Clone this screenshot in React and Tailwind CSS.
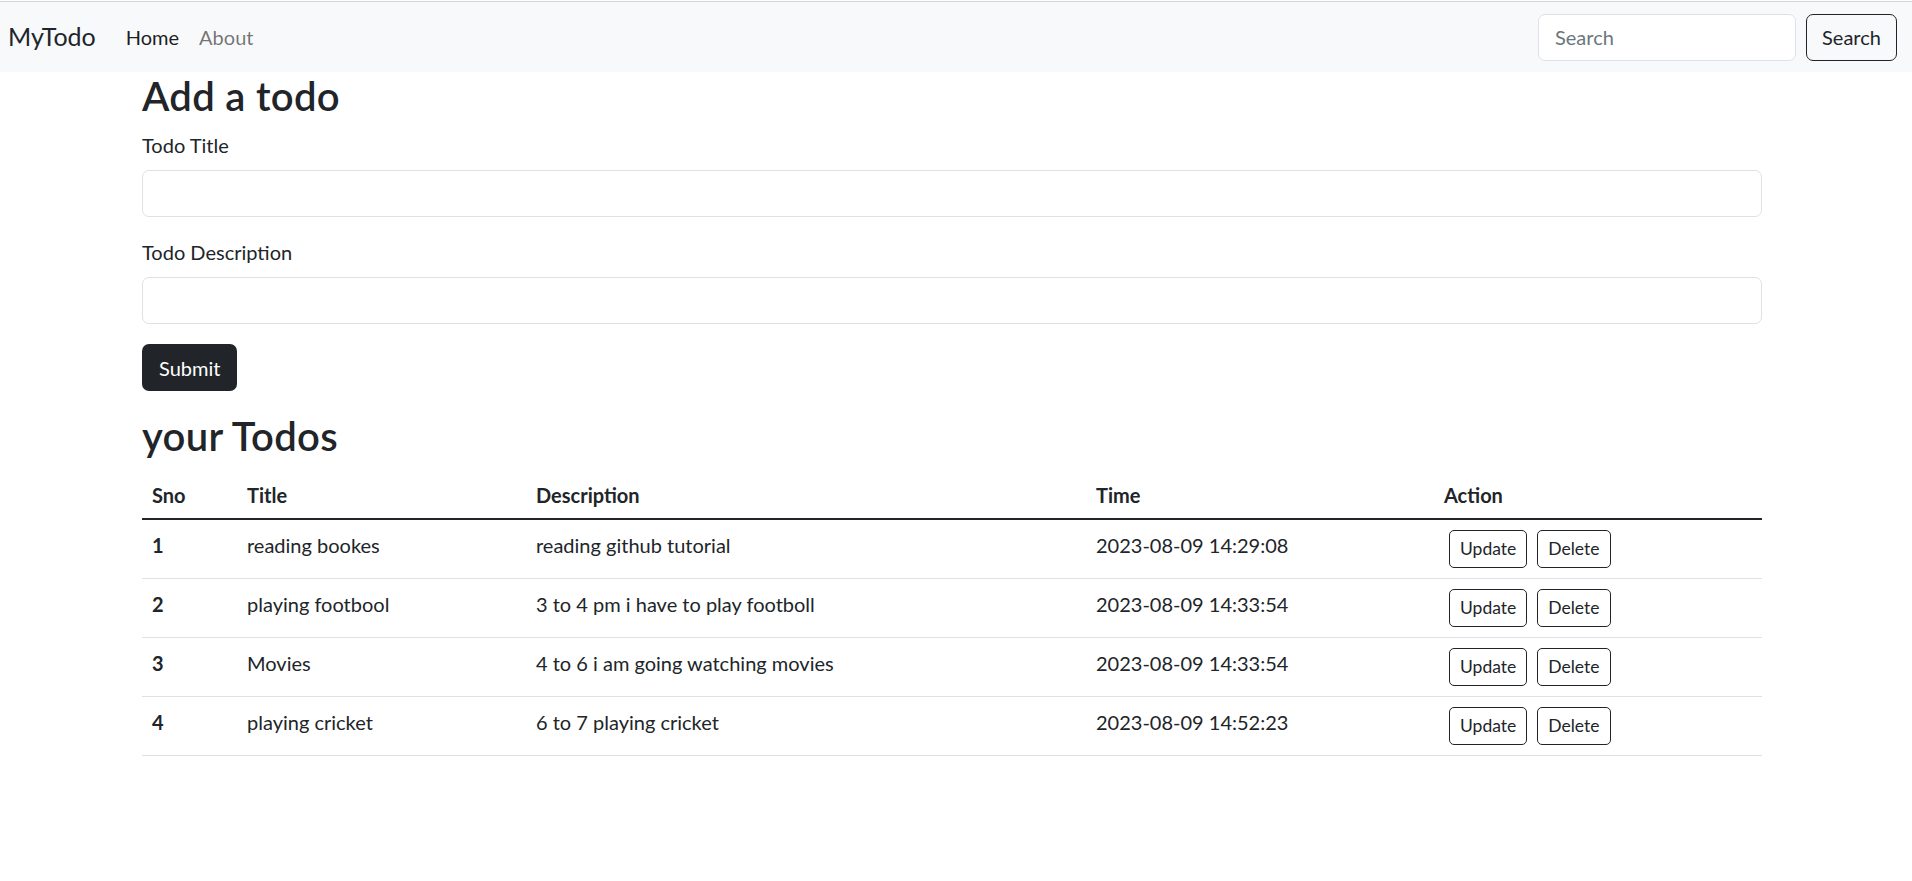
import { useState } from "react";

const initialTodos = [
  { sno: 1, title: "reading bookes", desc: "reading github tutorial", time: "2023-08-09 14:29:08" },
  { sno: 2, title: "playing footbool", desc: "3 to 4 pm i have to play footboll", time: "2023-08-09 14:33:54" },
  { sno: 3, title: "Movies", desc: "4 to 6 i am going watching movies", time: "2023-08-09 14:33:54" },
  { sno: 4, title: "playing cricket", desc: "6 to 7 playing cricket", time: "2023-08-09 14:52:23" },
];

export default function App() {
  const [todos] = useState(initialTodos);

  return (
    <div className="min-h-screen bg-white text-[#212529] font-['Lato',sans-serif]">
      {/* Navbar */}
      <nav className="mt-px border-t border-[#d4d4d4] bg-[#f8f9fa] h-[71px] flex items-center justify-between pl-[8px] pr-[15px]">
        <div className="flex items-center">
          <a href="#" className="text-[25px] text-[#212529] mr-[20px]">
            MyTodo
          </a>
          <a href="#" className="text-[20px] px-[10px] text-[rgba(0,0,0,0.9)]">
            Home
          </a>
          <a href="#" className="text-[20px] px-[10px] text-[rgba(0,0,0,0.55)]">
            About
          </a>
        </div>
        <form className="flex items-center gap-[10px]">
          <input
            type="search"
            placeholder="Search"
            className="w-[258px] h-[47px] rounded-[7px] border border-[#dee2e6] bg-white px-[16px] text-[20px] placeholder:text-[#6c757d] outline-none"
          />
          <button
            type="button"
            className="h-[47px] w-[91px] rounded-[7px] border border-[#212529] text-[20px] text-[#212529]"
          >
            Search
          </button>
        </form>
      </nav>

      {/* Main */}
      <main className="ml-[142px] w-[1620px]">
        <h2 className="text-[40px] leading-[48px] font-semibold mb-[10px] tracking-[0.3px]">Add a todo</h2>
        <form>
          <div className="mb-[20px]">
            <label className="block text-[20px] leading-[30px] mb-[10px]">Todo Title</label>
            <input
              type="text"
              className="block w-full h-[47px] rounded-[7px] border border-[#dee2e6] px-[15px] text-[20px] outline-none"
            />
          </div>
          <div className="mb-[20px]">
            <label className="block text-[20px] leading-[30px] mb-[10px]">Todo Description</label>
            <input
              type="text"
              className="block w-full h-[47px] rounded-[7px] border border-[#dee2e6] px-[15px] text-[20px] outline-none"
            />
          </div>
          <button
            type="button"
            className="h-[47px] px-[17px] rounded-[7px] bg-[#212529] text-white text-[20px]"
          >
            Submit
          </button>
        </form>

        <h2 className="mt-[21px] text-[40px] leading-[48px] font-semibold mb-[10px] tracking-[0.3px]">your Todos</h2>
        <table className="w-full table-fixed text-[20px] leading-[30px]">
          <colgroup>
            <col className="w-[95px]" />
            <col className="w-[289px]" />
            <col className="w-[560px]" />
            <col className="w-[348px]" />
            <col className="w-[328px]" />
          </colgroup>
          <thead>
            <tr>
              {["Sno", "Title", "Description", "Time", "Action"].map((h) => (
                <th
                  key={h}
                  className="text-left font-bold px-[10px] pt-[10px] pb-[8px] border-b-2 border-[#212529]"
                >
                  {h}
                </th>
              ))}
            </tr>
          </thead>
          <tbody>
            {todos.map((t) => (
              <tr key={t.sno}>
                <th className="text-left font-bold p-[10px] align-top border-b border-[#dee2e6]">{t.sno}</th>
                <td className="p-[10px] align-top border-b border-[#dee2e6]">{t.title}</td>
                <td className="p-[10px] align-top border-b border-[#dee2e6]">{t.desc}</td>
                <td className="p-[10px] align-top border-b border-[#dee2e6]">{t.time}</td>
                <td className="p-[10px] align-top border-b border-[#dee2e6]">
                  <div className="flex">
                    <button className="mx-[5px] h-[38px] px-[10px] rounded-[5px] border border-[#212529] text-[17.5px] leading-none">
                      Update
                    </button>
                    <button className="mx-[5px] h-[38px] px-[10px] rounded-[5px] border border-[#212529] text-[17.5px] leading-none">
                      Delete
                    </button>
                  </div>
                </td>
              </tr>
            ))}
          </tbody>
        </table>
      </main>
    </div>
  );
}
